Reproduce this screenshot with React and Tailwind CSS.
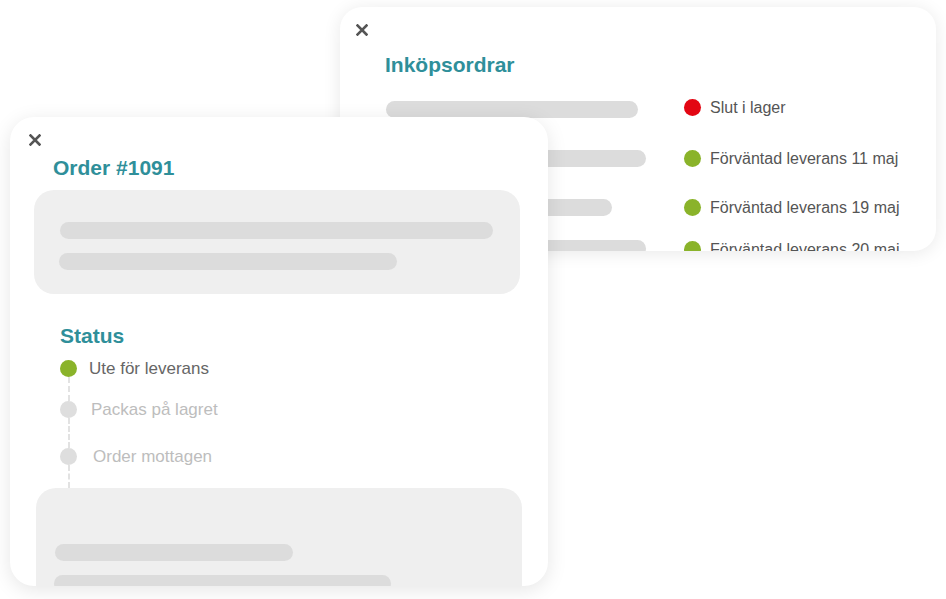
import React from "react";

function CloseIcon() {
  return (
    <svg width="12" height="12" viewBox="0 0 12 12" className="block">
      <path d="M1.5 1.5 L10.5 10.5 M10.5 1.5 L1.5 10.5" stroke="#555555" strokeWidth="2.6" strokeLinecap="square" />
    </svg>
  );
}

function Bar({ w }) {
  return <div className="h-[17px] rounded-full bg-[#dcdcdc]" style={{ width: w }} />;
}

function StatusDot({ color }) {
  return <div className={`h-[17px] w-[17px] shrink-0 rounded-full ${color}`} />;
}

const rows = [
  { bar: 252, dot: "bg-[#e30613]", text: "Slut i lager", h: "h-[49px]", shift: "-translate-y-[2px]" },
  { bar: 260, dot: "bg-[#8ab32a]", text: "Förväntad leverans 11 maj", h: "h-[49px]", shift: "" },
  { bar: 226, dot: "bg-[#8ab32a]", text: "Förväntad leverans 19 maj", h: "h-[49px]", shift: "" },
  { bar: 260, dot: "bg-[#8ab32a]", text: "Förväntad leverans 20 maj", h: "h-[33px]", shift: "translate-y-[1px]" },
];

export default function App() {
  return (
    <div className="relative h-[599px] w-[946px] overflow-hidden bg-white font-['Liberation_Sans',Arial,sans-serif]">
      {/* Back window: Inköpsordrar */}
      <div className="absolute left-[340px] top-[7px] h-[244px] w-[596px] overflow-hidden rounded-[22px] bg-white shadow-[0_2px_18px_rgba(0,0,0,0.09)]">
        <div className="pl-[16px] pt-[17px]">
          <CloseIcon />
        </div>
        <div className="ml-[45px] mt-[17px] text-[21px] font-bold leading-[24px] text-[#2f8f9a]">Inköpsordrar</div>
        <div className="ml-[46px] mt-[8px] flex flex-col">
          {rows.map((r, i) => (
            <div key={i} className={`flex items-center ${r.h}`}>
              <div className="w-[298px] shrink-0">
                <Bar w={r.bar} />
              </div>
              <div className={`flex items-center gap-[9px] ${r.shift}`}>
                <StatusDot color={r.dot} />
                <span className="whitespace-nowrap text-[16px] leading-[20px] text-[#555555]">{r.text}</span>
              </div>
            </div>
          ))}
        </div>
      </div>

      {/* Front window: Order #1091 */}
      <div className="absolute left-[10px] top-[117px] h-[469px] w-[538px] overflow-hidden rounded-[24px] bg-white shadow-[0_4px_20px_rgba(0,0,0,0.10)]">
        <div className="pl-[19px] pt-[17px]">
          <CloseIcon />
        </div>
        <div className="ml-[43px] mt-[10px] text-[21px] font-bold leading-[24px] text-[#2f8f9a]">Order #1091</div>

        <div className="ml-[24px] mt-[10px] flex h-[104px] w-[486px] flex-col gap-[14px] rounded-[20px] bg-[#efefef] pl-[26px] pt-[32px]">
          <Bar w={433} />
          <div className="-ml-px">
            <Bar w={338} />
          </div>
        </div>

        <div className="ml-[50px] mt-[30px] text-[21px] font-bold leading-[24px] text-[#2f8f9a]">Status</div>

        <div className="ml-[50px] mt-[12px] flex flex-col">
          <div className="flex h-[41px]">
            <div className="flex w-[17px] flex-col items-center">
              <StatusDot color="bg-[#8ab32a]" />
              <div className="w-0 flex-1 border-l-2 border-dashed border-[#e2e2e2]" />
            </div>
            <span className="ml-[12px] text-[17px] leading-[17px] text-[#666666]">Ute för leverans</span>
          </div>
          <div className="flex h-[47px]">
            <div className="flex w-[17px] flex-col items-center">
              <StatusDot color="bg-[#dedede]" />
              <div className="w-0 flex-1 border-l-2 border-dashed border-[#e2e2e2]" />
            </div>
            <span className="ml-[14px] text-[17px] leading-[17px] text-[#bdbdbd]">Packas på lagret</span>
          </div>
          <div className="flex h-[40px]">
            <div className="flex w-[17px] flex-col items-center">
              <StatusDot color="bg-[#dedede]" />
              <div className="w-0 flex-1 border-l-2 border-dashed border-[#e2e2e2]" />
            </div>
            <span className="ml-[16px] text-[17px] leading-[17px] text-[#bdbdbd]">Order mottagen</span>
          </div>
        </div>

        <div className="ml-[26px] flex h-[130px] w-[486px] flex-col gap-[14px] rounded-[20px] bg-[#efefef] pl-[19px] pt-[56px]">
          <Bar w={238} />
          <div className="-ml-px">
            <Bar w={337} />
          </div>
        </div>
      </div>
    </div>
  );
}
